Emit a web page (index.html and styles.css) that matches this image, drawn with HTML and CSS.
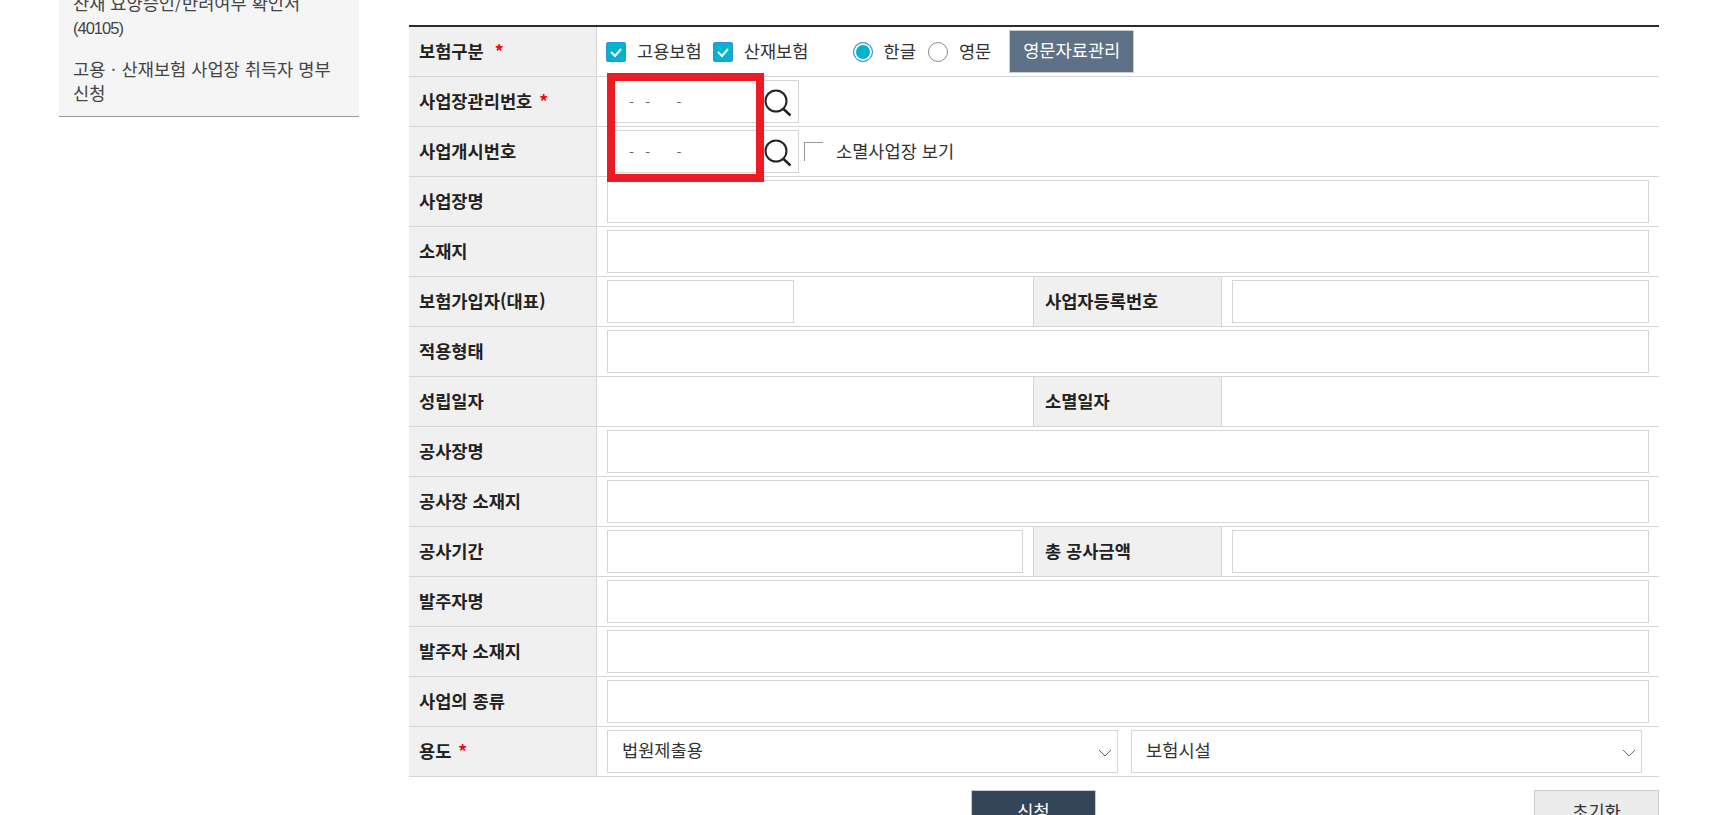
FILE: index.html
```html
<!DOCTYPE html>
<html lang="ko">
<head>
	<meta charset="utf-8">
	<title>고용·산재보험 사업장 취득자 명부 신청</title>
	<link rel="stylesheet" href="styles.css">
</head>
<body>
	<div class="page">
		<div class="side">
			<ul>
				<li>산재 요양승인/반려여부 확인서<br><span class="num">(40105)</span></li>
				<li>고용ㆍ산재보험 사업장 취득자 명부 신청</li>
			</ul>
		</div>
		<div class="main">
			<table class="form">
				<colgroup>
					<col class="c1"><col class="c2"><col class="c3"><col class="c4">
				</colgroup>
				<tr>
					<th>보험구분 <em class="em1">*</em></th>
					<td colspan="3">
						<div class="line">
							<span class="chk"><svg width="14" height="12" viewBox="0 0 14 12"><path d="M2 6l4 4 6-7" fill="none" stroke="#fff" stroke-width="2"/></svg></span>
							<span class="lb1">고용보험</span>
							<span class="chk"><svg width="14" height="12" viewBox="0 0 14 12"><path d="M2 6l4 4 6-7" fill="none" stroke="#fff" stroke-width="2"/></svg></span>
							<span class="lb1 lb-last">산재보험</span>
							<span class="radio on"></span>
							<span class="lb2">한글</span>
							<span class="radio"></span>
							<span class="lb2">영문</span>
							<a class="btn-en" href="#">영문자료관리</a>
						</div>
					</td>
				</tr>
				<tr>
					<th>사업장관리번호 <em>*</em></th>
					<td colspan="3">
						<div class="line">
							<input class="inp no" type="text" value="- -   -">
							<a class="find" href="#"><svg width="35" height="41" viewBox="0 0 35 41"><circle cx="12" cy="20" r="10.5" fill="none" stroke="#222" stroke-width="2"/><path d="M19.5 28l7 6.5" stroke="#222" stroke-width="2.4" fill="none"/></svg></a>
						</div>
					</td>
				</tr>
				<tr>
					<th>사업개시번호</th>
					<td colspan="3">
						<div class="line">
							<input class="inp no" type="text" value="- -   -">
							<a class="find" href="#"><svg width="35" height="41" viewBox="0 0 35 41"><circle cx="12" cy="20" r="10.5" fill="none" stroke="#222" stroke-width="2"/><path d="M19.5 28l7 6.5" stroke="#222" stroke-width="2.4" fill="none"/></svg></a>
							<span class="hide-chk"></span>
							<span class="txt">소멸사업장 보기</span>
						</div>
					</td>
				</tr>
				<tr><th>사업장명</th><td colspan="3"><input class="inp" type="text"></td></tr>
				<tr><th>소재지</th><td colspan="3"><input class="inp" type="text"></td></tr>
				<tr>
					<th>보험가입자(대표)</th>
					<td><input class="inp w187" type="text"></td>
					<th class="th2">사업자등록번호</th>
					<td><input class="inp" type="text"></td>
				</tr>
				<tr><th>적용형태</th><td colspan="3"><input class="inp" type="text"></td></tr>
				<tr>
					<th>성립일자</th>
					<td></td>
					<th class="th2">소멸일자</th>
					<td></td>
				</tr>
				<tr><th>공사장명</th><td colspan="3"><input class="inp" type="text"></td></tr>
				<tr><th>공사장 소재지</th><td colspan="3"><input class="inp" type="text"></td></tr>
				<tr>
					<th>공사기간</th>
					<td class="td-wide"><input class="inp" type="text"></td>
					<th class="th2">총 공사금액</th>
					<td><input class="inp" type="text"></td>
				</tr>
				<tr><th>발주자명</th><td colspan="3"><input class="inp" type="text"></td></tr>
				<tr><th>발주자 소재지</th><td colspan="3"><input class="inp" type="text"></td></tr>
				<tr><th>사업의 종류</th><td colspan="3"><input class="inp" type="text"></td></tr>
				<tr>
					<th>용도 <em>*</em></th>
					<td colspan="3">
						<div class="line selects">
							<div class="sel">법원제출용<svg width="14" height="8" viewBox="0 0 14 8"><path d="M1 1l6 6 6-6" fill="none" stroke="#666" stroke-width="1"/></svg></div>
							<div class="sel">보험시설<svg width="14" height="8" viewBox="0 0 14 8"><path d="M1 1l6 6 6-6" fill="none" stroke="#666" stroke-width="1"/></svg></div>
						</div>
					</td>
				</tr>
			</table>
			<div class="btns">
				<a class="btn-ok" href="#">신청</a>
				<a class="btn-reset" href="#">초기화</a>
			</div>
			<div class="redbox"></div>
		</div>
	</div>
</body>
</html>
```

FILE: styles.css
```css
html, body {
	margin: 0;
	padding: 0;
	height: 815px;
	overflow: hidden;
	background: #fff;
}
body {
	font-family: "Noto Sans CJK KR", "Noto Sans", sans-serif;
	font-size: 17.6px;
	color: #333;
}
a {
	text-decoration: none;
}
.page {
	display: flex;
	align-items: flex-start;
}

/* left menu */
.side {
	width: 300px;
	margin-left: 59px;
	margin-top: -9px;
	background: #f5f5f5;
	border-bottom: 1px solid #999;
}
.side ul {
	list-style: none;
	margin: 0;
	padding: 0 24px 11px 14px;
}
.side li {
	line-height: 24px;
	color: #444;
	padding-bottom: 17px;
}
.side li:last-child {
	padding-bottom: 0;
}
.num {
	font-family: "Liberation Sans", sans-serif;
	font-size: 16.5px;
	letter-spacing: -1px;
}

/* form table */
.main {
	position: relative;
	width: 1250px;
	margin-left: 50px;
	margin-top: 25px;
}
.form {
	width: 100%;
	table-layout: fixed;
	border-collapse: separate;
	border-spacing: 0;
	border-top: 2px solid #2b2b2b;
}
.c1 { width: 188px; }
.c2 { width: 436px; }
.c3 { width: 189px; }
.c4 { width: 437px; }
.form tr {
	height: 50px;
}
.form th, .form td {
	box-sizing: border-box;
	height: 50px;
	padding: 0 10px;
	border-bottom: 1px solid #d5d5d5;
	vertical-align: middle;
}
.form th {
	background: #f0f0f0;
	border-right: 1px solid #d5d5d5;
	text-align: left;
	font-weight: 700;
	color: #222;
	padding-bottom: 3px;
}
.form .th2 {
	border-left: 1px solid #d5d5d5;
	padding-left: 11px;
}
.form em {
	font-style: normal;
	color: #f00;
	margin-left: 2px;
}
.form em.em1 {
	margin-left: 6px;
}
.line {
	display: flex;
	align-items: center;
}
.inp {
	display: block;
	box-sizing: border-box;
	width: 100%;
	height: 43px;
	padding: 0 15px;
	border: 1px solid #d5d5d5;
	background: #fff;
	font-family: inherit;
	font-size: 16px;
	margin: 0;
}
.w187 {
	width: 187px;
}
.no {
	width: 157px;
	color: #666;
	font-size: 14px;
	padding-left: 21px;
	letter-spacing: 3.7px;
	border-right: 0;
}
.find {
	box-sizing: border-box;
	display: block;
	width: 35px;
	height: 43px;
	border: 1px solid #d5d5d5;
	border-left: 0;
}
.find svg {
	display: block;
}
.hide-chk {
	width: 18px;
	height: 18px;
	margin: 0 13px 0 5px;
	border-top: 1px solid #999;
	border-left: 1px solid #999;
}
.txt, .lb1, .lb2 {
	position: relative;
	top: -1px;
}

.chk {
	box-sizing: border-box;
	display: flex;
	align-items: center;
	justify-content: center;
	width: 20px;
	height: 20px;
	margin-left: -1px;
	background: #00b4cc;
	border: 1px solid #3b8be0;
	border-radius: 2px;
}
.lb1 {
	margin: 0 12px 0 11px;
}
.lb1.lb-last {
	margin-right: 44px;
}
.radio {
	box-sizing: border-box;
	width: 20px;
	height: 20px;
	border: 1px solid #888;
	border-radius: 50%;
	background: #fff;
}
.radio.on {
	border-color: #3b8be0;
	background: #00b4cc;
	box-shadow: inset 0 0 0 2px #fff;
}
.lb2 {
	margin: 0 12px 0 11px;
}
.btn-en {
	box-sizing: border-box;
	display: block;
	width: 125px;
	height: 43px;
	margin-left: 6px;
	line-height: 38px;
	text-align: center;
	background: #5f7186;
	border: 1px solid #ccc;
	color: #fff;
}
.selects {
	gap: 13px;
	padding-right: 7px;
}
.sel {
	box-sizing: border-box;
	flex: 1;
	position: relative;
	height: 43px;
	line-height: 38px;
	padding-left: 14px;
	border: 1px solid #d5d5d5;
}
.sel svg {
	position: absolute;
	right: 5px;
	top: 18px;
}

/* bottom buttons */
.btns {
	display: grid;
	grid-template-columns: 1fr auto 1fr;
	margin-top: 13px;
}
.btns a {
	box-sizing: border-box;
	display: block;
	height: 44px;
	line-height: 39px;
	text-align: center;
	border: 1px solid #ccc;
}
.btn-ok {
	grid-column: 2;
	width: 125px;
	margin-left: -1px;
	background: #34455a;
	color: #fff;
}
.btn-reset {
	grid-column: 3;
	justify-self: end;
	width: 125px;
	background: #ececec;
	color: #333;
}

/* red highlight drawn over the two number inputs */
.redbox {
	position: absolute;
	left: 198px;
	top: 48px;
	box-sizing: border-box;
	width: 157px;
	height: 109px;
	border: 8px solid #ed1c24;
}
```
